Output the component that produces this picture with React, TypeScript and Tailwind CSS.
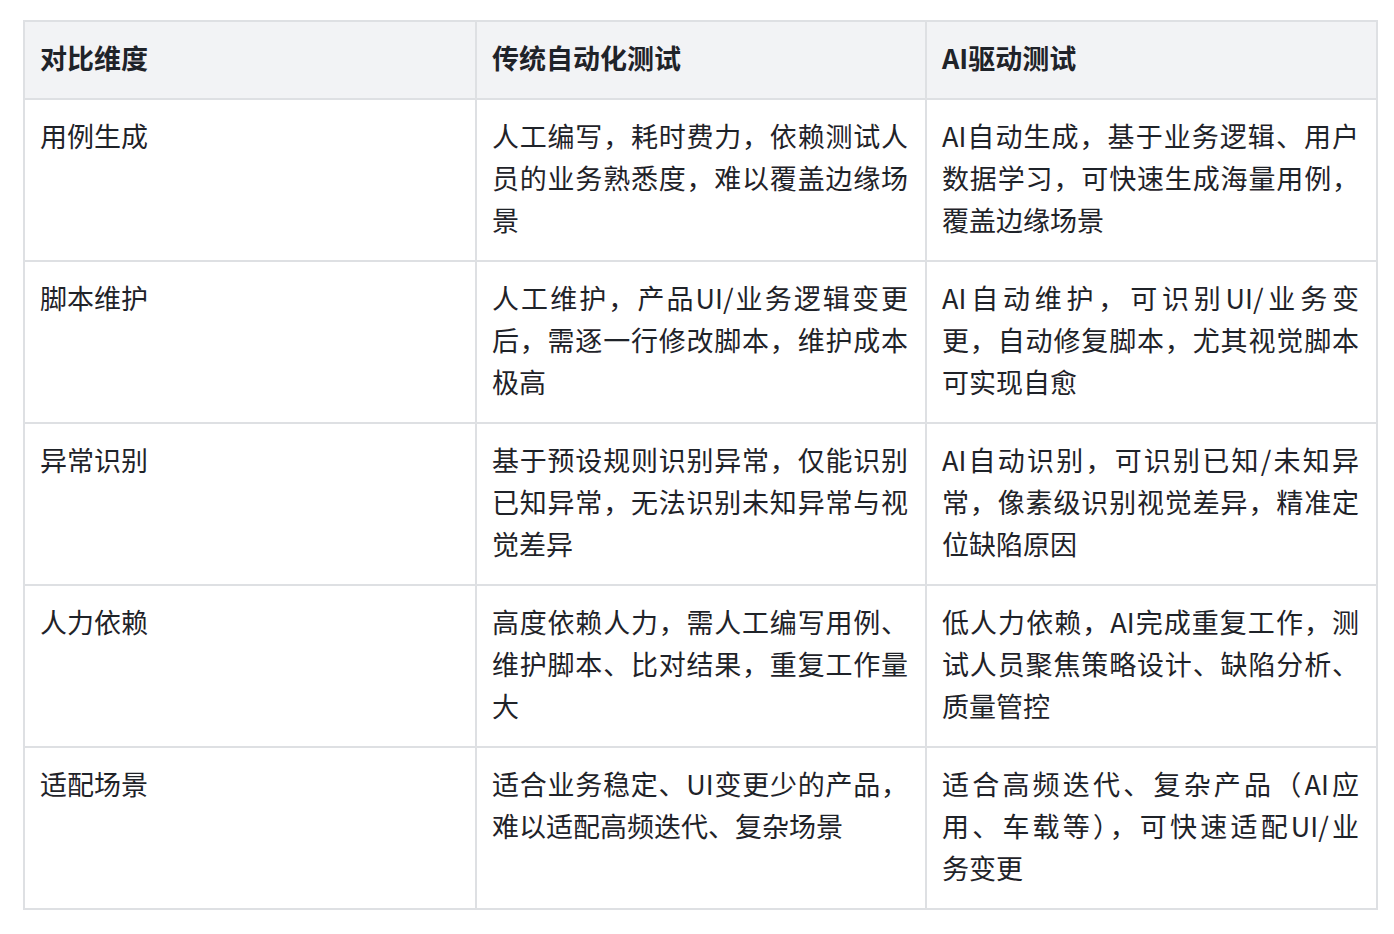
import React from "react";

const rows: string[][][] = [
  [
    ["用例生成"],
    ["人工编写，耗时费力，依赖测试人", "员的业务熟悉度，难以覆盖边缘场", "景"],
    ["AI自动生成，基于业务逻辑、用户", "数据学习，可快速生成海量用例，", "覆盖边缘场景"],
  ],
  [
    ["脚本维护"],
    ["人工维护，产品UI/业务逻辑变更", "后，需逐一行修改脚本，维护成本", "极高"],
    ["AI自动维护，可识别UI/业务变", "更，自动修复脚本，尤其视觉脚本", "可实现自愈"],
  ],
  [
    ["异常识别"],
    ["基于预设规则识别异常，仅能识别", "已知异常，无法识别未知异常与视", "觉差异"],
    ["AI自动识别，可识别已知/未知异", "常，像素级识别视觉差异，精准定", "位缺陷原因"],
  ],
  [
    ["人力依赖"],
    ["高度依赖人力，需人工编写用例、", "维护脚本、比对结果，重复工作量", "大"],
    ["低人力依赖，AI完成重复工作，测", "试人员聚焦策略设计、缺陷分析、", "质量管控"],
  ],
  [
    ["适配场景"],
    ["适合业务稳定、UI变更少的产品，", "难以适配高频迭代、复杂场景"],
    ["适合高频迭代、复杂产品（AI应", "用、车载等），可快速适配UI/业", "务变更"],
  ],
];

export default function App() {
  return (
    <div
      className="w-[1394px] h-[934px] bg-white pt-[20px] pl-[23px]"
      style={{ fontFamily: '"Noto Sans CJK SC", "Noto Sans", sans-serif' }}
    >
      <table className="w-[1353px] table-fixed border-collapse text-[27px] leading-[42px] text-[#1f2329]">
        <colgroup>
          <col className="w-[452px]" />
          <col className="w-[450px]" />
          <col className="w-[451px]" />
        </colgroup>
        <thead>
          <tr className="bg-[#f2f3f5]">
            {["对比维度", "传统自动化测试", "AI驱动测试"].map((h) => (
              <th
                key={h}
                className="border-2 border-[#dee0e3] pl-[15px] pr-[17px] pt-[15px] pb-[19px] text-left font-semibold align-top"
              >
                {h}
              </th>
            ))}
          </tr>
        </thead>
        <tbody>
          {rows.map((r, ri) => (
            <tr key={ri}>
              {r.map((lines, i) => (
                <td
                  key={i}
                  className="border-2 border-[#dee0e3] pl-[15px] pr-[17px] pt-[15px] pb-[19px] align-top"
                >
                  {lines.map((ln, li) =>
                    li < lines.length - 1 ? (
                      <span key={li} className="block text-justify [text-align-last:justify]">
                        {ln}
                      </span>
                    ) : (
                      <span key={li} className="block text-left">
                        {ln}
                      </span>
                    )
                  )}
                </td>
              ))}
            </tr>
          ))}
        </tbody>
      </table>
    </div>
  );
}
